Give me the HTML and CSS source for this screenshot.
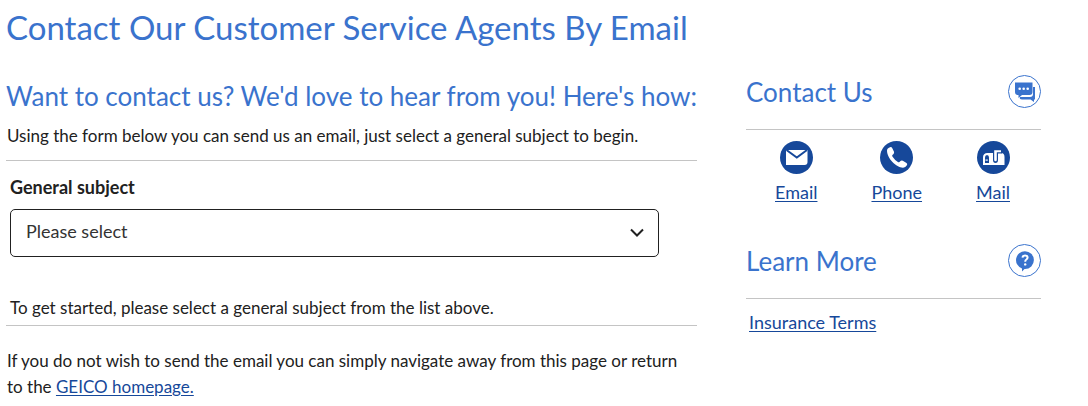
FILE: index.html
```html
<!DOCTYPE html>
<html lang="en">
<head>
<meta charset="utf-8">
<meta name="viewport" content="width=device-width, initial-scale=1">
<title>Contact Our Customer Service Agents By Email</title>
<link rel="stylesheet" href="styles.css">
</head>
<body>
<div class="page">
  <h1 class="page-title">Contact Our Customer Service Agents By Email</h1>
  <div class="columns">
    <main class="main">
      <h2 class="heading heading-wide">Want to contact us? We'd love to hear from you! Here's how:</h2>
      <p class="intro">Using the form below you can send us an email, just select a general subject to begin.</p>
      <form class="form">
        <label class="label" for="subject">General subject</label>
        <div class="select-wrap">
          <select class="select" id="subject"><option>Please select</option></select>
          <svg class="chevron" viewBox="0 0 14 10" aria-hidden="true"><path d="M1 1.500 7 7.500 13 1.500"/></svg>
        </div>
        <p class="hint">To get started, please select a general subject from the list above.</p>
      </form>
      <p class="outro">If you do not wish to send the email you can simply navigate away from this page or return to the <a class="link" href="#">GEICO homepage.</a></p>
    </main>
    <aside class="side">
      <section class="panel">
        <header class="panel-head">
          <h2 class="heading">Contact Us</h2>
          <svg class="round" viewBox="0 0 33 33" aria-hidden="true">
            <circle class="ring" cx="16.5" cy="16.5" r="16"/>
            <path class="blue" d="M25 12h2v12.500h-1V27l-3.500-2.500H14q-2.500 0-2.500-2.500h10.500q3 0 3-3z"/>
            <path class="blue" d="M7 7.500h17.500v9.500q0 3-3 3H14l-3.500 3v-3H10q-3 0-3-3z"/>
            <circle class="white" cx="11.700" cy="13.700" r="1.300"/><circle class="white" cx="15.700" cy="13.700" r="1.300"/><circle class="white" cx="19.700" cy="13.700" r="1.300"/>
          </svg>
        </header>
        <nav class="contacts">
          <a class="contact link" href="#">
            <svg class="round" viewBox="0 0 33 33" aria-hidden="true">
              <circle class="navy" cx="16.500" cy="16.500" r="16.500"/>
              <path class="white" d="M6 9h21.500v12q0 3-3 3H6z"/>
              <path class="navy-line" d="m6.500 9 10.300 7.500L27 9"/>
            </svg>
            <span>Email</span>
          </a>
          <a class="contact link" href="#">
            <svg class="round" viewBox="0 0 33 33" aria-hidden="true">
              <circle class="navy" cx="16.500" cy="16.500" r="16.500"/>
              <path class="white" d="M7 9.500q0-1.700 1.500-2.500l1.500-.8q1.500-.5 2.300 1l1.700 3.600q.5 1.500-.7 2.400l-.9.800q-.5.700 0 1.500 2.100 3.300 5.500 5.600.9.500 1.600-.2l1-1q1-.9 2.300-.2l3.700 2.300q1.300 1 .4 2.300-1.400 2.500-4 2.400C16.500 26.500 7 17.500 7 9.500"/>
            </svg>
            <span>Phone</span>
          </a>
          <a class="contact link" href="#">
            <svg class="round" viewBox="0 0 33 33" aria-hidden="true">
              <circle class="navy" cx="16.500" cy="16.500" r="16.500"/>
              <path class="white" d="M6 24v-7.500Q6 12 10.500 12H24q3.500 0 3.500 4V24z"/>
              <path class="navy" d="M8 22v-5.500q0-2.500 2-2.500t2 2.500V22z"/>
              <path class="white" d="M8.500 18.500h2.300v1.200H8.500z"/>
              <path class="navy" d="M16 8h9v4.500h-4v6.500q0 3-2.500 3T16 19z"/>
              <path class="white" d="M17.200 9.200H24v2h-4.200v7.600q0 1.500-1.300 1.500t-1.300-1.500z"/>
            </svg>
            <span>Mail</span>
          </a>
        </nav>
      </section>
      <section class="panel">
        <header class="panel-head">
          <h2 class="heading">Learn More</h2>
          <svg class="round" viewBox="0 0 33 33" aria-hidden="true">
            <circle class="ring" cx="16.500" cy="16.500" r="16"/>
            <path class="blue" d="M17 7.200a8.900 8.900 0 1 1 0 17.800h-.5L14 27.500v-3A8.900 8.900 0 0 1 17 7.200"/>
            <path class="question" d="M14.500 13.700q.2-2.200 2.600-2.200t2.500 2.100q0 1.200-1.200 1.900t-1.200 2.200"/>
            <circle class="white" cx="17.200" cy="20.400" r="1.200"/>
          </svg>
        </header>
        <p class="terms"><a class="link" href="#">Insurance Terms</a></p>
      </section>
    </aside>
  </div>
</div>
</body>
</html>
```
FILE: styles.css
```css
* { box-sizing: border-box; }
body {
  margin: 0;
  background: #fff;
  color: #212121;
  font: 18px/26px Lato, "Liberation Sans", sans-serif;
}
h1, h2, p { margin: 0; font-weight: 400; }
.page { padding: 5px 47px 6px 6px; }
.page-title, .heading { color: #3a73cd; }
.page-title { font-size: 33px; line-height: 44px; }
.columns {
  display: grid;
  grid-template-columns: 691fr 295fr;
  column-gap: 49px;
  margin-top: 26px;
}
.main { padding-top: 5px; }
.heading { font-size: 26px; line-height: 32px; }
.heading-wide { margin-right: -16px; }
.intro { padding: 11px 0 11px 1px; border-bottom: 1px solid #c4c4c4; }
.intro, .hint, .outro { font-size: 17px; }
.form { padding: 13px 38px 4px 4px; border-bottom: 1px solid #c4c4c4; }
.label { display: block; font-weight: 700; font-size: 18px; }
.select-wrap { display: grid; align-items: center; margin-top: 9px; }
.select, .chevron { grid-area: 1 / 1; }
.select {
  appearance: none;
  width: 100%;
  height: 48px;
  padding: 0 40px 4px 15px;
  border: 1px solid #212121;
  border-radius: 5px;
  background: #fff;
  color: #333;
  font: inherit;
}
.chevron {
  justify-self: end;
  width: 14px;
  height: 10px;
  margin-right: 15px;
  fill: none;
  stroke: #212121;
  stroke-width: 2;
  pointer-events: none;
}
.hint { margin-top: 38px; }
.outro { padding: 22px 0 0 1px; }
.link { color: #16489a; text-underline-offset: 2px; }
.panel + .panel { margin-top: 39px; }
.panel-head {
  display: flex;
  justify-content: space-between;
  align-items: center;
  padding-bottom: 21px;
  border-bottom: 1px solid #c4c4c4;
}
.round { display: block; width: 33px; height: 33px; flex: none; }
.contacts {
  display: flex;
  justify-content: space-between;
  padding: 11px 31px 0 29px;
}
.contact { display: flex; flex-direction: column; align-items: center; gap: 5px; }
.terms { padding: 10px 0 0 3px; }
.ring { fill: #fff; stroke: #3a73cd; }
.blue { fill: #3a73cd; stroke: #fff; stroke-width: 1; paint-order: stroke; }
.navy { fill: #16489a; }
.white { fill: #fff; }
.navy-line { fill: none; stroke: #16489a; stroke-width: 2; }
.question { fill: none; stroke: #fff; stroke-width: 2; }
```
